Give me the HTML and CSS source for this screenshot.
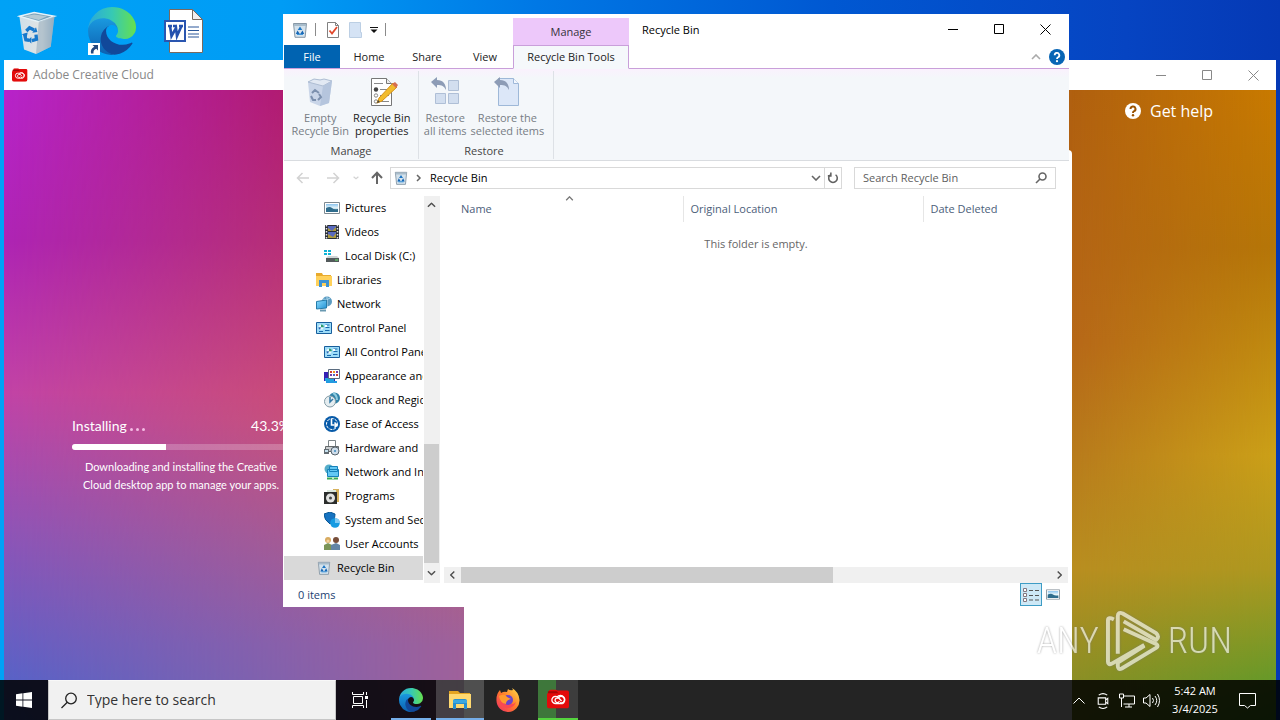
FILE: index.html
```html
<!DOCTYPE html>
<html lang="en">
<head>
<meta charset="utf-8">
<title>Recycle Bin</title>
<link rel="stylesheet" href="styles.css">
</head>
<body>
<svg class="defs" aria-hidden="true">
  <defs>
    <linearGradient id="g-edge-green" x1="0" y1="0" x2="1" y2="0"><stop offset="0" stop-color="#2aa8dc"/><stop offset=".5" stop-color="#36c9b4"/><stop offset="1" stop-color="#66e04e"/></linearGradient>
    <linearGradient id="g-edge-mid" x1="0" y1="0" x2="0" y2="1"><stop offset="0" stop-color="#1b9de2"/><stop offset="1" stop-color="#0c5fb0"/></linearGradient>
    <linearGradient id="g-bin" x1="0" y1="0" x2="1" y2="0"><stop offset="0" stop-color="#cfdfe9"/><stop offset=".65" stop-color="#e2e4e4"/><stop offset="1" stop-color="#9ab3c6"/></linearGradient>
    <linearGradient id="g-fox" x1="0" y1="1" x2="1" y2="0"><stop offset="0" stop-color="#f0286a"/><stop offset=".5" stop-color="#ff7a2a"/><stop offset="1" stop-color="#ffe14a"/></linearGradient>
    <linearGradient id="g-sky" x1="0" y1="0" x2="0" y2="1"><stop offset="0" stop-color="#8cc4ee"/><stop offset=".5" stop-color="#e8f6fa"/><stop offset="1" stop-color="#2d6d92"/></linearGradient>
    <linearGradient id="g-screen" x1="0" y1="0" x2="1" y2="1"><stop offset="0" stop-color="#8bdcff"/><stop offset="1" stop-color="#2292d4"/></linearGradient>
  </defs>
  <symbol id="i-edge" viewBox="0 0 256 256">
    <path fill="#11489a" d="M231.1 190.5c-3.4 1.8-6.9 3.4-10.5 4.7a101.7 101.7 0 0 1-35.9 6.5c-47.3 0-88.5-32.5-88.5-74.3a31.5 31.5 0 0 1 16.4-27.3c-42.8 1.8-53.8 46.4-53.8 72.5 0 73.9 68.1 81.4 82.8 81.4 7.9 0 19.8-2.3 27-4.6l1.3-.4a128.3 128.3 0 0 0 66.6-52.8 4 4 0 0 0-5.4-5.7z"/>
    <path fill="url(#g-edge-mid)" d="M105.7 241.4a79.2 79.2 0 0 1-22.7-21.3 80.7 80.7 0 0 1 29.5-120c3.2-1.5 8.5-4.1 15.6-4a32.4 32.4 0 0 1 25.7 13 31.9 31.9 0 0 1 6.3 18.7c0-.2 24.5-79.6-80-79.6-43.9 0-80 41.6-80 78.2a130.2 130.2 0 0 0 12.1 56 128 128 0 0 0 156.4 67 75.5 75.5 0 0 1-62.8-8z"/>
    <path fill="url(#g-edge-green)" d="M152.3 148.9c-.8 1-3.3 2.5-3.3 5.7 0 2.6 1.7 5.1 4.7 7.2 14.4 10 41.5 8.7 41.6 8.7a59.6 59.6 0 0 0 30.3-8.3 61.4 61.4 0 0 0 30.4-52.9c.3-22.4-8-37.3-11.3-43.9C223.5 23.9 177.7 0 128 0A128 128 0 0 0 0 126.2c.5-36.5 36.8-66 80-66 3.5 0 23.5.3 42 10a72.6 72.6 0 0 1 30.9 29.3c6.1 10.6 7.2 24.1 7.2 29.5s-2.7 13.3-7.8 19.9z"/>
  </symbol>
  <symbol id="i-bin" viewBox="0 0 16 16">
    <path d="M1.5 1.5h13l-1.4 13.8H3z" fill="#d4e2ec" stroke="#8797a5"/><path d="M2 2h12v2H2z" fill="#a8bccb"/>
    <path d="M8 4.6l2.300 3.400H5.700z" fill="#1d76c4"/><path d="M3.800 12l1.700-3.600 2.300 3.600zM12.200 12l-1.700-3.600L8.200 12z" fill="#1565b5"/><path d="M5 12.400h6" stroke="#2d8ad6"/>
  </symbol>
  <symbol id="i-cc" viewBox="0 0 24 20">
    <path d="M2 2q0-2 2-2h5l2 1h10q2 0 2 2v14q0 3-3 3H3q-3 0-3-3V5z" fill="#e30b0b"/><path d="M1 2h9l2 2H1z" fill="#a80606"/>
    <g fill="none" stroke="#fff" stroke-width="1.4"><path d="M13.500 13.800a3.400 3.400 0 1 0-1.200-5.400M15.800 14.800H9a3.800 3.800 0 0 1-.2-7.600q1.400 0 2.400.8l4 4"/><path d="M16 15a4.600 4.600 0 1 0-5.500-7.200M13 12.300a2.400 2.400 0 1 1-.9-3"/></g>
  </symbol>
  <symbol id="i-panel" viewBox="0 0 16 12">
    <path d="M.5.5h15v11H.5z" fill="#9ddcf8" stroke="#185e9c"/><circle cx="5" cy="5.300" r="2.500" fill="#eaf8ff"/><path d="M5 5.300V2.500a2.800 2.800 0 0 1 2.800 2.800z" fill="#2e9b6a"/><path d="M5 5.300H2.400A2.700 2.700 0 0 0 4 7.800z" fill="#286bb5"/><path d="M9.500 3h4M9.500 5.500h4M3 9.500h4M9 8.500h4.500" stroke="#1a69ad"/><path d="M9 3h2v2H9z" fill="#fff"/>
  </symbol>
  <symbol id="i-pic" viewBox="0 0 16 12">
    <path d="M.5.5h15v11H.5z" fill="#fff" stroke="#7e8a92"/><path d="M2 2h12v8H2z" fill="url(#g-sky)"/><path d="M2 6q4-2 6 0t6 1v3H2z" fill="#2f6d8d"/>
  </symbol>
  <symbol id="i-close" viewBox="0 0 11 11"><path d="M.5.5l10 10M10.500.5l-10 10" stroke="currentColor" fill="none"/></symbol>
  <symbol id="i-max" viewBox="0 0 11 11"><path d="M.5.5h9v9h-9z" stroke="currentColor" fill="none"/></symbol>
  <symbol id="i-min" viewBox="0 0 11 11"><path d="M0 5.500h10" stroke="currentColor" fill="none"/></symbol>
  <symbol id="i-chev" viewBox="0 0 10 6"><path d="M1 1l4 4 4-4" stroke="currentColor" fill="none" stroke-width="1.600"/></symbol>
  <symbol id="i-undo" viewBox="0 0 16 16"><path d="M0 5l6-5v3c6 0 9 4 9 10-2-4-4-5-9-5v3z" fill="#8d9cb6"/></symbol>
</svg>

<div class="desktop">
  <div class="shortcuts">
    <svg class="shortcut" viewBox="-1 -2 50 52" role="img" aria-label="Recycle Bin">
      <path d="M6 8l16-4 22 4-4 33-16 8-13-5z" fill="url(#g-bin)"/><path d="M6 8l16-4 22 4-17 6z" fill="#7ba3bb" stroke="#e5f2f8" stroke-width="1.500"/><path d="M11 8l11-2 14 2-9 4z" fill="#b5cad4"/><path d="M27 14l17-6-4 33-16 8z" fill="#8fa9bb" opacity=".55"/>
      <g fill="none" stroke="#1678cc" stroke-width="3.600"><path d="M13.500 24l3.500-3.500 5 2.500"/><path d="M11.500 27l1.500 6.500 3.500.5"/><path d="M19.500 34.500l5-1.500-.5-5"/></g><path d="M20 26l5.500-1-1.500-5zM8.500 27.500l6.500-2-1 5zM19 30.500v7l-4-3.500z" fill="#1678cc"/>
    </svg>
    <span class="shortcut edge-shortcut"><svg viewBox="0 0 48 48" role="img" aria-label="Microsoft Edge"><use href="#i-edge" width="48" height="48"/></svg>
      <svg class="arrow" viewBox="0 0 12 12"><path d="M0 0h12v12H0z" fill="#fff"/><path d="M4.500 2H10v5.500L8.300 5.800Q5 7 5.500 10.500H3Q2 6 6.300 3.800z" fill="#24477e"/></svg></span>
    <svg class="shortcut word" viewBox="0 0 39 44" role="img" aria-label="Document">
      <path d="M5.500.5h23l10 10v33h-33z" fill="#fff" stroke="#79695e"/><path d="M28.500.5v10h10z" fill="#f1eeee" stroke="#79695e"/><path d="M24 18h11M24 21.500h11M24 25h11M24 28h11" stroke="#2b579a"/><path d="M1 12h20v20H1z" fill="#fff" stroke="#2a56b0" stroke-width="2"/><path d="M4 17h4M9 17h3M15 17h4M6 17l1.500 10 4.500-8 1 8 4.500-10" fill="none" stroke="#2451ae" stroke-width="2.600"/>
    </svg>
  </div>

  <section class="window installer" aria-label="Adobe Creative Cloud">
    <header class="titlebar">
      <svg class="app-icon" viewBox="0 0 24 20"><use href="#i-cc"/></svg>
      <span class="installer-title">Adobe Creative Cloud</span>
      <div class="win-buttons">
        <button aria-label="Minimize"><svg><use href="#i-min"/></svg></button><button aria-label="Maximize"><svg><use href="#i-max"/></svg></button><button aria-label="Close"><svg><use href="#i-close"/></svg></button>
      </div>
    </header>
    <div class="installer-body">
      <div class="install-pane">
        <div class="install-status">
          <div class="install-line"><label for="install-progress">Installing <span class="dots"><i></i><i></i><i></i></span></label><span>43.3%</span></div>
          <progress id="install-progress" max="100" value="43.3"></progress>
          <p>Downloading and installing the Creative Cloud desktop app to manage your apps.</p>
        </div>
      </div>
      <div class="sign-in-panel"></div>
      <div class="help-pane"><a href="#help"><svg viewBox="0 0 16 16"><circle cx="8" cy="8" r="8" fill="#fff"/><path d="M5.500 6a2.500 2.500 0 1 1 3.600 2.200Q8 8.700 8 10" fill="none" stroke="#9a5200" stroke-width="2"/><circle cx="8" cy="12.300" r="1.200" fill="#9a5200"/></svg>Get help</a></div>
    </div>
  </section>

  <section class="window explorer" aria-label="Recycle Bin">
    <header class="explorer-top">
      <div class="quick">
        <svg class="ic16"><use href="#i-bin"/></svg><span class="bar"></span>
        <button aria-label="Properties"><svg class="ic16" viewBox="0 0 16 16"><path d="M2.500.5h8l3 3v12h-11z" fill="#fff" stroke="#818181"/><path d="M10.500.5v3h3" fill="none" stroke="#818181"/><path d="M4.500 8.500l2.500 3 5-6.500" fill="none" stroke="#e1482c" stroke-width="1.800"/></svg></button>
        <button aria-label="New folder" disabled><svg class="ic16" viewBox="0 0 16 16"><path d="M2.500.5h11v10h1v5h-12z" fill="#d5e3f5" stroke="#bccfe4"/></svg></button>
        <button class="more" aria-label="Customize toolbar"><svg viewBox="0 0 8 6"><path d="M0 .5h8" stroke="#111"/><path d="M.5 2.500h7L4 6z" fill="#111"/></svg></button><span class="bar"></span>
      </div>
      <div class="context-title">Manage</div>
      <h1>Recycle Bin</h1>
      <div class="win-buttons">
        <button aria-label="Minimize"><svg><use href="#i-min"/></svg></button><button aria-label="Maximize"><svg><use href="#i-max"/></svg></button><button aria-label="Close"><svg><use href="#i-close"/></svg></button>
      </div>
    </header>
    <nav class="tabs">
      <button class="file">File</button><button class="plain">Home</button><button class="plain">Share</button><button class="plain">View</button><button class="active">Recycle Bin Tools</button>
      <span class="tabs-fill"><button aria-label="Collapse ribbon"><svg class="up" viewBox="0 0 10 6"><use href="#i-chev"/></svg></button><button aria-label="Help"><svg class="ic16" viewBox="0 0 16 16"><circle cx="8" cy="8" r="8" fill="#0865b5"/><path d="M5.700 6.200a2.300 2.300 0 1 1 3.400 2Q8 8.800 8 10" fill="none" stroke="#fff" stroke-width="1.800"/><circle cx="8" cy="12.200" r="1.100" fill="#fff"/></svg></button></span>
    </nav>
    <div class="ribbon">
      <div class="group manage">
        <div class="tools">
          <button disabled><svg viewBox="0 0 32 32"><path d="M4 6l6-3 18 2-3 22-9 3-10-4z" fill="#c9d5e8"/><path d="M4 6l6-3 6 1 4-1 8 2-9 5z" fill="#e2e9f3" stroke="#aebdd3"/><path d="M19 10l9-5-3 22-9 3z" fill="#b5c5dd"/><path d="M8 17l3-3 4 3M7 20l2 4h3M14 24l3-3-2-3" stroke="#7c90ae" stroke-width="2" fill="none"/></svg><span>Empty<br>Recycle Bin</span></button>
          <button><svg viewBox="0 0 32 32"><path d="M5.500 2.500h15l5 5v22h-20z" fill="#fff" stroke="#777"/><path d="M20.500 2.500v5h5" fill="#eee" stroke="#777"/><path d="M8 7.500h9M14 13.500h7M14 19.500h9M14 25.500h9" stroke="#888"/><circle cx="10" cy="13.500" r="2.200" fill="#444"/><circle cx="10" cy="19.500" r="1.700" fill="#fff" stroke="#888"/><circle cx="10" cy="25.500" r="1.700" fill="#fff" stroke="#888"/><path d="M11 27l2-5L27 7l4 4-15 14z" fill="#f2bc2d" stroke="#d89218"/><path d="M26 8l3-2 3 3-2 3z" fill="#d66f50"/><path d="M11 27l1-3 2 2z" fill="#444"/></svg><span>Recycle Bin<br>properties</span></button>
        </div>
        <span>Manage</span>
      </div>
      <div class="group restore">
        <div class="tools">
          <button disabled><svg viewBox="0 0 32 32"><g fill="#d2deef" stroke="#afbfd6"><path d="M19.500 4.500h10v10h-10zM6.500 17.500h10v10h-10zM19.500 17.500h10v10h-10z"/></g><use href="#i-undo" x="1" y="1" width="18" height="16"/></svg><span>Restore<br>all items</span></button>
          <button disabled><svg viewBox="0 0 32 32"><path d="M7.500 2.500h15l5 5v22h-20z" fill="#dce7f8" stroke="#9eb8d8"/><path d="M22.500 2.500v5h5" fill="#f4f8ff" stroke="#9eb8d8"/><use href="#i-undo" x="2" y="1" width="18" height="16"/></svg><span>Restore the<br>selected items</span></button>
        </div>
        <span>Restore</span>
      </div>
    </div>
    <div class="address-row">
      <div class="arrows">
        <button aria-label="Back" disabled><svg viewBox="0 0 14 12"><path d="M13 6H2M6.500 1L1.500 6l5 5" /></svg></button><button aria-label="Forward" disabled><svg viewBox="0 0 14 12"><path d="M1 6h11M7.500 1l5 5-5 5"/></svg></button><button class="recent" aria-label="Recent" disabled><svg viewBox="0 0 10 6"><path d="M2 1.500L5 4l3-2.500"/></svg></button><button class="up-level" aria-label="Up"><svg viewBox="0 0 14 14"><path d="M7 13V2M2 7l5-5.300L12 7"/></svg></button>
      </div>
      <div class="address"><svg class="ic14"><use href="#i-bin"/></svg><svg class="crumb" viewBox="0 0 6 8"><path d="M1 1l3 3-3 3" fill="none" stroke="#666" stroke-width="1.500"/></svg><span>Recycle Bin</span>
        <button aria-label="Previous locations"><svg class="chev" viewBox="0 0 10 6"><use href="#i-chev"/></svg></button><button class="refresh" aria-label="Refresh"><svg viewBox="0 0 14 14"><path d="M10 3.200A5 5 0 1 1 4 3.200M4.500.5v4H1" fill="none" stroke="#606060" stroke-width="1.800"/></svg></button></div>
      <label class="search"><input type="search" placeholder="Search Recycle Bin" aria-label="Search Recycle Bin"><svg viewBox="0 0 12 12"><circle cx="7.500" cy="4.500" r="3.500"/><path d="M5 7L1 11"/></svg></label>
    </div>
    <div class="content">
      <ul class="tree">
        <li class="sub"><svg class="ic16"><use href="#i-pic"/></svg>Pictures</li>
        <li class="sub"><svg class="ic16" viewBox="0 0 16 16"><path d="M1 1h14v14H1z" fill="#292d35"/><path d="M2.500 1v14M13.500 1v14" stroke="#e5e5e5" stroke-width="1.500" stroke-dasharray="1.500 1.500"/><path d="M4 2h8v5H4zM4 8h8v6H4z" fill="#5869bd"/><path d="M4 4l4 3 4-4v4H4zM4 10l5 3 3-4v5H4z" fill="#ad9b3a"/></svg>Videos</li>
        <li class="sub"><svg class="ic16" viewBox="0 0 16 16"><path d="M0 2h3v2H0zM4 2h3v2H4zM0 5h3v2H0zM4 5h3v2H4z" fill="#0fb4d6"/><path d="M2 10l2-2h9l2 2z" fill="#cfd4d5"/><path d="M2 10h13v4H2z" fill="#535a5b"/><path d="M11 12h3" stroke="#66eb6c"/></svg>Local Disk (C:)</li>
        <li><svg class="ic16" viewBox="0 0 16 16"><path d="M0 1h6l1 2h8v11H0z" fill="#e8aa2d"/><path d="M0 4h16v10H0z" fill="#ffd15b"/><path d="M3 15V8h10v7h-3v-4H6v4z" fill="#3d93d3"/></svg>Libraries</li>
        <li><svg class="ic16" viewBox="0 0 16 16"><circle cx="11" cy="5.500" r="5" fill="#5b9bc1"/><path d="M7 3q4 2 7-1M11 1v9" stroke="#b0d9ed" fill="none"/><path d="M.5 5.500l10-1.500v8l-10 1z" fill="url(#g-screen)" stroke="#257ba9"/><path d="M4 14.500h6" stroke="#6999b1" stroke-width="2"/></svg>Network</li>
        <li><svg class="ic16"><use href="#i-panel"/></svg>Control Panel</li>
        <li class="sub"><svg class="ic16"><use href="#i-panel"/></svg>All Control Panel Items</li>
        <li class="sub"><svg class="ic16" viewBox="0 0 16 16"><path d="M0 4h11v9H0z" fill="#3520b4"/><path d="M1 10h9v3H1z" fill="#21a4dd"/><path d="M4.500 1.500h11v9h-11z" fill="#fff" stroke="#5b6c7f"/><path d="M6 3h2v2H6zM12 6h2v2h-2z" fill="#cf3e34"/><path d="M9 3h2v2H9z" fill="#f29420"/><path d="M12 3h2v2h-2zM6 6h2v2H6z" fill="#773ba5"/><path d="M9 6h2v2H9z" fill="#5264c0"/><path d="M2 14h11" stroke="#239ae1" stroke-width="2"/></svg>Appearance and Personalization</li>
        <li class="sub"><svg class="ic16" viewBox="0 0 16 16"><circle cx="10.500" cy="6" r="5.500" fill="#2f82a8"/><path d="M9 1q4 2 4 7" stroke="#8ecbdf" fill="none" stroke-width="2"/><circle cx="6" cy="9.500" r="5.500" fill="#e5edf0" stroke="#839ba6"/><path d="M6 5v5l3-3" fill="none" stroke="#3579a5" stroke-width="1.500"/></svg>Clock and Region</li>
        <li class="sub"><svg class="ic16" viewBox="0 0 16 16"><circle cx="8" cy="8" r="8" fill="#075aa8"/><circle cx="8" cy="8" r="5.500" fill="none" stroke="#fff" stroke-dasharray="3 1"/><path d="M7.500 3v6h5M10.500 6.500l2.500 2.500-2.500 2.500" fill="none" stroke="#fff" stroke-width="1.600"/></svg>Ease of Access</li>
        <li class="sub"><svg class="ic16" viewBox="0 0 16 16"><path d="M4.500.5h7v6h-7z" fill="#fff" stroke="#7d8588"/><path d="M1.500 6.500h13v5h-13z" fill="#c9cdcf" stroke="#65696b"/><path d="M0 9h5v5H0z" fill="#636c73"/><path d="M1 10h3v2H1z" fill="#c6e1ef"/><circle cx="11" cy="11" r="4" fill="#cfddea" stroke="#57636b"/><circle cx="11" cy="11" r="1" fill="#3e88bc"/></svg>Hardware and</li>
        <li class="sub"><svg class="ic16" viewBox="0 0 16 16"><circle cx="5" cy="5" r="4.500" fill="#55adc9"/><path d="M5.500 2.500h8v5h-8zM3.500 5.500h11v7h-11z" fill="#63c8f4" stroke="#1681ba"/><path d="M3 14.500h11" stroke="#3baa55" stroke-width="2"/><path d="M8 13h2v2H8z" fill="#bbecc5"/></svg>Network and Internet</li>
        <li class="sub"><svg class="ic16" viewBox="0 0 16 16"><path d="M9 1h6v13H9z" fill="#d7b25d"/><path d="M3 2h9v12H3z" fill="#dce8dd"/><path d="M0 4h13v12H0z" fill="#2b2d2c"/><circle cx="6.500" cy="10" r="4.500" fill="#e1e2e0"/><circle cx="6.500" cy="10" r="1.500" fill="#434646"/></svg>Programs</li>
        <li class="sub"><svg class="ic16" viewBox="0 0 16 16"><path d="M0 2l6-2 5 2q0 7-5 10Q0 8 0 2z" fill="#1673c1" stroke="#075796"/><circle cx="11" cy="11" r="4.800" fill="#169be2"/><path d="M11 6v5h5a5 5 0 0 0-5-5z" fill="#80caf3"/></svg>System and Security</li>
        <li class="sub"><svg class="ic16" viewBox="0 0 16 16"><circle cx="4" cy="4" r="3" fill="#d8ab60"/><path d="M0 14V9l4-2 4 2v5z" fill="#7b9457"/><circle cx="12" cy="4" r="3" fill="#774d39"/><path d="M7 14V9l5-2 4 2v5z" fill="#6285a5"/><circle cx="4" cy="5" r="1.600" fill="#f3d3a0"/></svg>User Accounts</li>
        <li class="selected"><svg class="ic16" viewBox="-1 -1 16 16"><use href="#i-bin" width="14" height="14"/></svg>Recycle Bin</li>
      </ul>
      <div class="scroll-v"><button aria-label="Scroll up"><svg class="up" viewBox="0 0 10 6"><use href="#i-chev"/></svg></button><span class="thumb-v"></span><button aria-label="Scroll down"><svg viewBox="0 0 10 6"><use href="#i-chev"/></svg></button></div>
      <div class="files">
        <table>
          <thead><tr><th class="name">Name<svg class="sort up" viewBox="0 0 10 6"><use href="#i-chev"/></svg></th><th class="origin">Original Location</th><th>Date Deleted</th></tr></thead>
          <tbody><tr><td colspan="3">This folder is empty.</td></tr></tbody>
        </table>
        <div class="scroll-h"><button aria-label="Scroll left"><svg class="left" viewBox="0 0 10 6"><use href="#i-chev"/></svg></button><span class="track-h"><span class="thumb-h"></span></span><button aria-label="Scroll right"><svg class="right" viewBox="0 0 10 6"><use href="#i-chev"/></svg></button></div>
      </div>
    </div>
    <footer class="status"><span>0 items</span>
      <button class="view on" aria-label="Details view"><svg viewBox="0 0 16 14"><g fill="#fff" stroke="#837780"><path d="M.5.5h3v3h-3zM.5 5.500h3v3h-3zM.5 10.500h3v3h-3z"/></g><path d="M6 2.500h4M12 2.500h4M6 7.500h4M12 7.500h4M6 12h4M12 12h4" stroke="#555"/></svg></button><button class="view" aria-label="Thumbnail view"><svg viewBox="0 0 16 12"><use href="#i-pic"/></svg></button>
    </footer>
  </section>

  <div class="watermark"><span>ANY</span><svg viewBox="0 0 56 62"><g fill="none" stroke="#fff" stroke-width="4" stroke-linejoin="round"><path d="M8 9Q2 6 2 10v42q0 4 4 2l33-19"/><path d="M12 44V6q0-5 5-3l34 20q4 4 0 7L18 11"/><path d="M18 19l33 15q3 2 0 4L16 59q-4 2-4-3v-3l27-17"/></g></svg><span>RUN</span></div>

  <footer class="taskbar">
    <button class="start" aria-label="Start"><svg viewBox="0 0 16 16"><path d="M0 2.200l6.500-.9v6.300H0zM7.300 1.200L16 0v7.600H7.300zM0 8.400h6.500v6.300L0 13.800zM7.300 8.400H16V16l-8.700-1.200z" fill="#fff"/></svg></button>
    <label class="task-search"><svg viewBox="0 0 16 16"><circle cx="10" cy="6" r="5.300"/><path d="M6.300 9.700L.5 15.500"/></svg><input type="text" placeholder="Type here to search" aria-label="Type here to search"></label>
    <button class="task" aria-label="Task view"><svg class="task-view" viewBox="0 0 17 16" fill="none" stroke="#fff"><path d="M.5 0v2.500h11V0M1.500 4.500h9v7h-9zM.5 16v-2.500h11V16M14.500 0v3M14.500 8v8"/><path d="M13 4h3v3h-3z" fill="#fff" stroke="none"/></svg></button>
    <button class="task running" aria-label="Edge"><svg><use href="#i-edge"/></svg></button>
    <button class="task running current" aria-label="File Explorer"><svg viewBox="0 0 24 24"><path d="M1 3h9l2 2h10v4H1z" fill="#e5a521"/><path d="M1 6h22v14H1z" fill="#ffd970"/><path d="M5 21v-8q0-2 2-2h10q2 0 2 2v8h-3v-5H8v5z" fill="#278fce"/><path d="M5 12h14v3H5z" fill="#3ba7df"/></svg></button>
    <button class="task" aria-label="Firefox"><svg viewBox="0 0 24 24"><path d="M12 1q2 2 5 1l-1-2q7 4 7.500 12a11.500 11.500 0 0 1-23 1Q0 6 4 2l1 3q3-2 6-1z" fill="url(#g-fox)"/><path d="M5 9q-3 9 5 11 7 1 10-6-3 3-6 2Q6 14 9 8z" fill="#fb4853"/><circle cx="12" cy="12" r="5" fill="#6a45ca"/><path d="M3 8q6-3 8 1l4 2q-5 1-5 5-6-1-7-8z" fill="#ff9b2e"/></svg></button>
    <button class="task cc-task" aria-label="Creative Cloud"><svg viewBox="0 0 24 20"><use href="#i-cc"/></svg></button>
    <div class="tray">
      <svg class="tray-up" viewBox="0 0 12 7"><path d="M.5 6.500L6 1l5.500 5.500"/></svg>
      <svg viewBox="0 0 16 16"><path d="M3.500 5.500h7v6h-7zM10.500 7.500l2-1.500v5l-2-1.500M4 3q4-3 8 0M4 14q4 3 8 0"/></svg>
      <svg viewBox="0 0 18 16"><path d="M5.500 3.500h11v8h-11M11 11.500v3M7 14.500h7M1.500 1.500h4v4h-4zM3.500 5.500v9"/></svg>
      <svg viewBox="0 0 18 16"><path d="M1.500 5.500H4l4-3.500v12l-4-3.500H1.500zM10.500 5.500q2 2.500 0 5M13 3.500q3.500 4.500 0 9M15.500 1.500q4 6.500 0 13"/></svg>
      <time datetime="2025-03-04T05:42">5:42 AM<br>3/4/2025</time>
      <svg class="note" viewBox="0 0 17 17"><path d="M.5 1.500h16v12h-5L8.500 16l-3-2.500h-5z"/></svg>
    </div>
  </footer>
</div>
</body>
</html>
```

FILE: styles.css
```css
* { box-sizing: border-box; }
body { margin: 0; font: 11px/16px "Open Sans", "Noto Sans", sans-serif; color: #000; }
button, input { font: inherit; color: inherit; }
button { border: 0; padding: 0; background: none; display: flex; align-items: center; justify-content: center; }
.defs { position: absolute; width: 0; height: 0; }
.up { transform: rotate(180deg); }
.left { transform: rotate(90deg); }
.right { transform: rotate(-90deg); }
.ic16 { width: 16px; height: 16px; flex: none; }
.ic14 { width: 14px; height: 14px; flex: none; }

.desktop { position: relative; height: 100vh; min-height: 640px; overflow: hidden; background: linear-gradient(to right, #00a2f6 0%, #009cf5 22%, #0078e5 42%, #0058d2 65%, #0644c2 88%, #0539b5 100%); }
.shortcuts { display: flex; gap: 28px; padding: 7px 12px; align-items: center; }
.shortcut { width: 48px; height: 48px; }
.edge-shortcut { position: relative; }
.edge-shortcut > svg:first-child { width: 48px; height: 48px; }
.arrow { position: absolute; left: 0; bottom: 0; width: 12px; height: 12px; }
.word { width: 39px; height: 44px; }

.window { position: absolute; display: flex; flex-direction: column; background: #fff; }
.win-buttons { display: flex; align-self: stretch; margin-left: auto; }
.win-buttons button { width: 46px; }
.win-buttons svg { width: 11px; height: 11px; }

.installer { inset: 60px 4px 0; }
.titlebar { display: flex; align-items: center; height: 30px; padding-left: 8px; color: #888; }
.app-icon { width: 16px; height: 14px; margin-right: 5px; }
.installer-title { font-size: 12px; }
.installer-body { flex: 1; display: grid; grid-template-columns: 460px 1fr 204px; background: #b06010; }
.install-pane { position: relative; padding: 327px 0 0 68px; color: #fff; font-family: Lato, "Open Sans", sans-serif; background: linear-gradient(#b823cb, #ae24b4 24%, #c243a6 48%, #8f54b7 70%, #5663c8 95%, #4e68cc); }
.install-pane::before { content: ""; position: absolute; inset: 0; background: linear-gradient(#ac1638, #bd3850 26%, #cf5660 52%, #b35f80 72%, #9f619a 88%); mask-image: linear-gradient(to right, transparent, #000); -webkit-mask-image: linear-gradient(to right, transparent, #000); }
.install-status { position: relative; width: 218px; font-size: 11px; line-height: 18px; text-align: center; }
.install-line { display: flex; justify-content: space-between; font-size: 14px; }
.dots { display: inline-flex; gap: 3px; }
.dots i { width: 3px; height: 3px; border-radius: 50%; background: #f5bce5; }
progress { display: block; width: 100%; height: 6px; margin: 9px 0 8px; border: 0; border-radius: 3px; overflow: hidden; appearance: none; -webkit-appearance: none; }
progress::-webkit-progress-bar { background: rgba(255,255,255,.22); }
progress::-webkit-progress-value { background: #fff; }
.install-status p { margin: 0; }
.sign-in-panel { margin-top: 60px; border-radius: 0 4px 0 0; background: #fff; }
.help-pane { position: relative; padding: 10px 0 0 53px; background: linear-gradient(#b0600f, #b76818 40%, #b98e20 76%, #8b8f25 94%, #808e28); }
.help-pane::before { content: ""; position: absolute; inset: 0; background: linear-gradient(#c87a00, #b57608 25%, #cba018 58%, #ad9820 76%, #659929 94%, #4e9428); mask-image: linear-gradient(to right, transparent, #000); -webkit-mask-image: linear-gradient(to right, transparent, #000); }
.help-pane a { position: relative; display: inline-flex; align-items: center; gap: 9px; color: #fff; font-size: 16px; line-height: 22px; text-decoration: none; }
.help-pane svg { width: 16px; height: 16px; }

.explorer { inset: 14px 211px 113px 283px; padding-left: 1px; }
.explorer-top { display: flex; height: 31px; padding-right: 1px; align-items: center; }
.quick { display: flex; align-items: center; width: 229px; padding-left: 8px; }
.quick button { margin-right: 6px; }
.bar { width: 1px; height: 13px; margin: 0 9px 0 7px; background: #8b8b8b; }
.quick .more { width: 9px; margin: 0; }
.more svg { width: 8px; height: 6px; }
.context-title { align-self: flex-end; width: 116px; height: 27px; padding-top: 6px; text-align: center; background: #edc8fa; color: #35333a; }
h1 { margin: 0 0 0 13px; font-size: 11px; font-weight: 400; }
.tabs { display: flex; height: 24px; color: #222; }
.tabs > * { border-bottom: 1px solid #c99fda; }
.tabs .file { width: 56px; color: #fff; background: #0063b1; }
.plain { width: 58px; }
.plain + .active { margin-left: -1px; }
.tabs .active { width: 116px; background: #f5f8fb; border: 1px solid #c99fda; border-bottom-color: #f5f8fb; }
.tabs-fill { flex: 1; display: flex; justify-content: flex-end; gap: 8px; padding-right: 4px; color: #aaa; }
.tabs-fill .up { width: 10px; height: 6px; }
.ribbon { display: flex; height: 92px; background: linear-gradient(#faf1fd, #f4f7fa 9px); border-bottom: 1px solid #d9dce0; }
.group { display: flex; flex-direction: column; justify-content: space-between; align-items: center; width: 135px; padding: 5px 0 0; margin: 2px 0 1px; border-right: 1px solid #dde1e6; color: #444; }
.restore { padding-right: 4px; }
.tools { display: flex; gap: 4px; white-space: nowrap; }
.tools button { flex-direction: column; line-height: 13px; color: #222; }
.tools button:disabled { color: #777d85; }
.tools svg { width: 32px; height: 32px; margin-bottom: 3px; }

.address-row { display: flex; align-items: center; height: 34px; padding: 0 13px 0 12px; }
.arrows { display: flex; align-items: center; width: 94px; }
.arrows svg { width: 14px; height: 12px; fill: none; stroke: #d2d2d2; stroke-width: 1.5; }
.arrows button { width: 30px; justify-content: flex-start; }
.arrows .recent { width: 8px; margin-left: -4px; justify-content: center; }
.arrows .recent svg { width: 8px; height: 6px; }
.arrows .up-level { width: 30px; padding-left: 4px; justify-content: center; }
.up-level svg { height: 14px; stroke: #666; stroke-width: 2; }
.address { flex: 1; display: flex; align-items: center; height: 22px; padding-left: 3px; border: 1px solid #d9d9d9; }
.address > span { margin-left: 8px; flex: 1; }
.crumb { width: 6px; height: 8px; margin-left: 8px; }
.address button { width: 16px; height: 20px; color: #666; }
.chev { width: 10px; height: 6px; }
.address .refresh { border-left: 1px solid #d9d9d9; width: 17px; }
.refresh svg { width: 12px; height: 12px; }
.search { display: flex; align-items: center; width: 202px; height: 22px; margin-left: 12px; padding: 0 8px; border: 1px solid #d9d9d9; }
.search input { flex: 1; min-width: 0; padding: 0; border: 0; outline: 0; background: none; }
.search input::placeholder { color: #606060; opacity: 1; }
.search svg { width: 12px; height: 12px; fill: none; stroke: #666; stroke-width: 1.6; }

.content { flex: 1; display: flex; min-height: 0; padding-top: 1px; }
.tree { width: 140px; margin: 0; padding: 0; list-style: none; overflow: hidden; border-right: 1px solid #fff; }
.tree li { display: flex; align-items: center; gap: 5px; height: 24px; padding-left: 32px; white-space: nowrap; }
.tree .sub { padding-left: 40px; }
.tree .selected { background: #d9d9d9; }
.scroll-v { display: flex; flex-direction: column; width: 16px; background: #f0f0f0; color: #505050; }
.scroll-v button { height: 17px; width: 15px; }
.scroll-v svg, .scroll-h svg { width: 9px; height: 6px; }
.thumb-v { height: 119px; margin-top: auto; margin-right: 1px; background: #cdcdcd; }
.scroll-v button:last-child { height: 20px; }
.files { flex: 1; display: flex; flex-direction: column; justify-content: space-between; margin: 0 1px 0 4px; }
table { width: 100%; border-collapse: collapse; table-layout: fixed; }
th { position: relative; height: 26px; padding: 0 7px; border-right: 1px solid #e6e6e6; text-align: left; font-weight: 400; color: #4c607a; }
th:last-child { border: 0; }
.name { width: 239px; padding-left: 17px; }
.origin { width: 240px; }
.sort { position: absolute; left: 121px; top: 0; width: 9px; height: 5px; color: #777; }
td { padding: 14px 0 0; text-align: center; color: #666; }
.scroll-h { display: flex; height: 16px; background: #f0f0f0; color: #505050; }
.scroll-h button { width: 17px; }
.track-h { flex: 1; display: flex; }
.thumb-h { width: 63%; background: #cdcdcd; }
.status { display: flex; align-items: center; height: 24px; padding: 0 5px 1px 14px; color: #1c3f72; }
.status span { margin-right: auto; }
.view { width: 22px; height: 23px; }
.view svg { width: 14px; height: 11px; }
.view.on { border: 1px solid #3d9cc5; background: #cde8f6; }
.view.on svg { width: 16px; height: 14px; }

.watermark { position: absolute; right: 48px; bottom: 48px; display: flex; align-items: center; gap: 7px; color: #fff; opacity: .65; font: 300 37px/62px "Roboto Condensed", Roboto, sans-serif; filter: drop-shadow(0 0 1px #777); }
.watermark svg { width: 55px; height: 62px; }

.taskbar { position: absolute; inset: auto 0 0; display: flex; height: 40px; color: #fff; background: rgba(0,0,0,.86); }
.start { width: 48px; }
.start svg { width: 16px; height: 16px; }
.task-search { display: flex; align-items: center; gap: 10px; width: 288px; padding-left: 12px; background: #f1f1f1; border: 1px solid #c6c6c6; border-top-color: #f8f8f8; }
.task-search svg { width: 16px; height: 17px; fill: none; stroke: #222; stroke-width: 1.3; }
.task-search input { flex: 1; min-width: 0; border: 0; padding: 0; outline: 0; background: none; font-size: 14px; color: #222; }
.task-search input::placeholder { color: #333; opacity: 1; }
.task { width: 48px; }
.task svg { width: 24px; height: 24px; }
.task .task-view { width: 17px; height: 16px; }
.task.running { position: relative; width: 52px; padding-left: 2px; }
.running::after { content: ""; position: absolute; inset: auto 5px 0 7px; height: 2px; background: #76aee9; }
.task.current { width: 48px; padding: 0; background: rgba(255,255,255,.2); }
.current::after { inset: auto 0 0; }
.task.cc-task { position: relative; width: 40px; margin-left: 6px; background: linear-gradient(to right, #3e773b 18px, #3d3d3d 18px); border-bottom: 2px solid #55d43e; }
.task.cc-task svg { width: 23px; height: 20px; }
.tray { display: flex; align-items: center; margin-left: auto; padding-right: 24px; }
.tray svg { width: 18px; height: 17px; margin-right: 6px; fill: none; stroke: #fff; }
.tray .tray-up { width: 12px; height: 7px; margin-right: 9px; }
time { width: 58px; margin: 0 15px 0 0; text-align: center; line-height: 18px; }
.tray .note { margin: 0; width: 17px; }
```
